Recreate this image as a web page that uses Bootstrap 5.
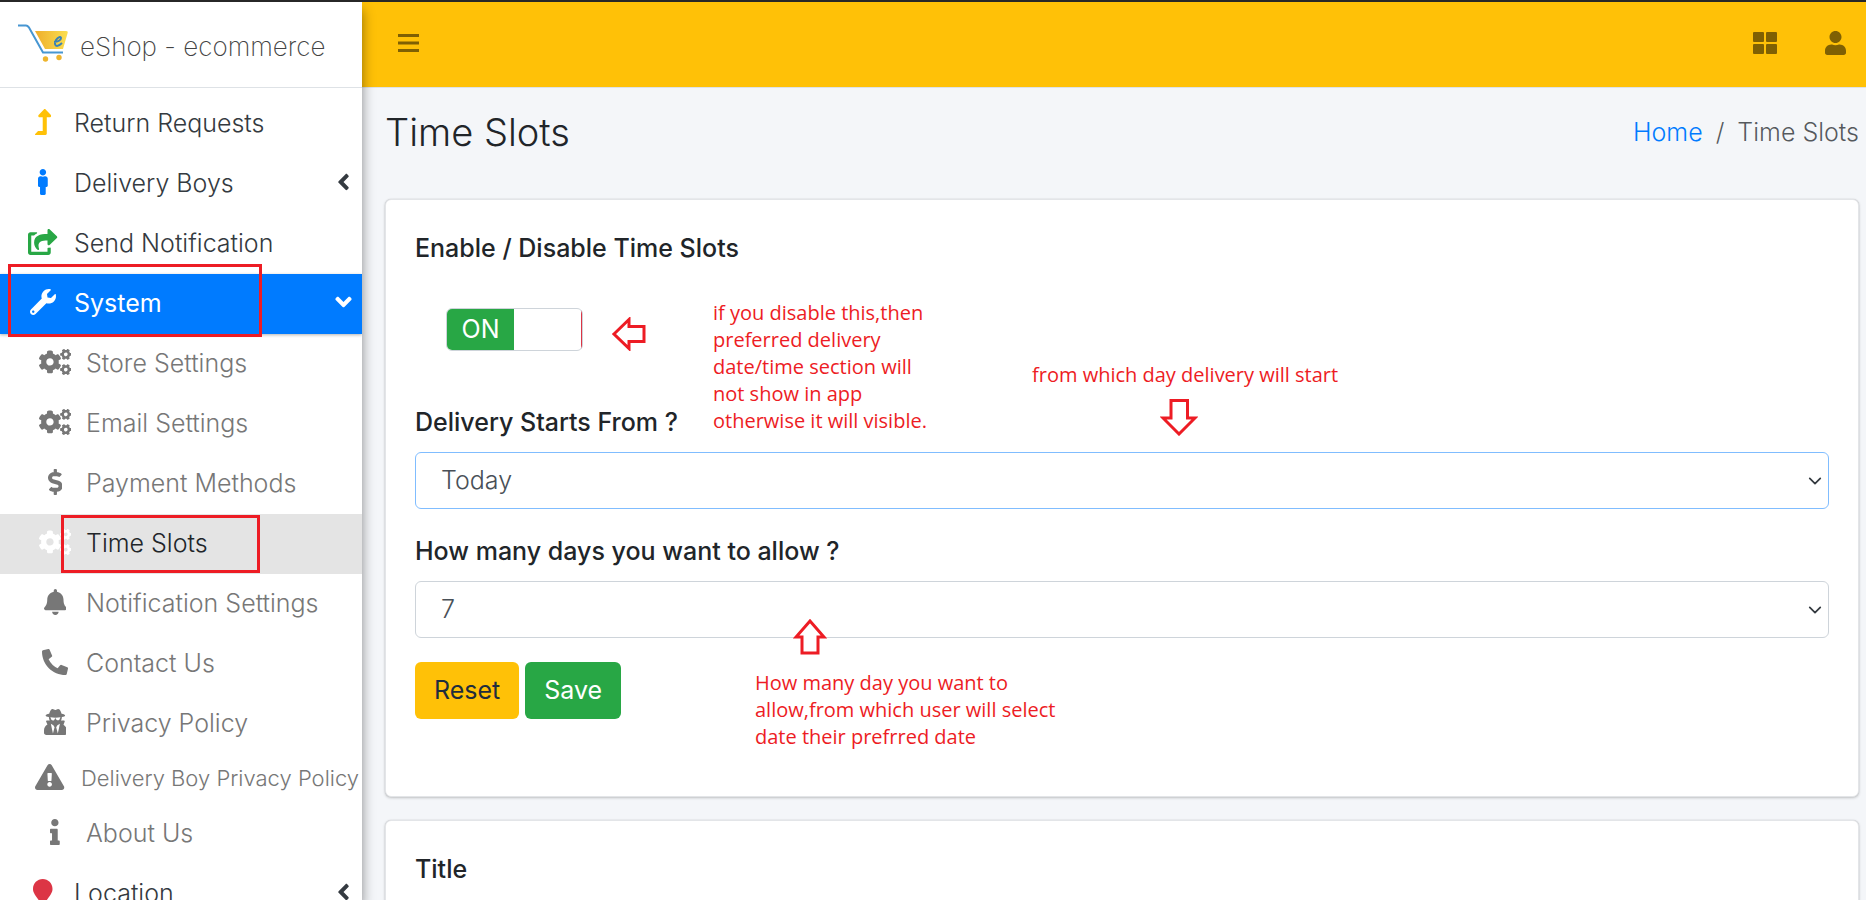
<!DOCTYPE html>
<html lang="en">
<head>
<meta charset="utf-8">
<meta name="viewport" content="width=device-width, initial-scale=1">
<title>Time Slots | eShop - ecommerce</title>
<link href="https://cdn.jsdelivr.net/npm/bootstrap@5.3.0/dist/css/bootstrap.min.css" rel="stylesheet">
<style>
:root{--amber:#ffc107;--pen:#ed1c24;--blue:#007bff;--green:#28a745}
body{font-family:Inter,"Open Sans",sans-serif;font-size:25px;font-weight:300;line-height:36px;color:#212529;background:#f4f6f9;border-top:2px solid #272727}
svg{display:block;fill:currentColor}
.side-panel{width:362px;background:#fff;z-index:5;box-shadow:0 8px 12px rgba(0,0,0,.45)}
.brand-link{height:86px;padding:4px 18px 0;gap:12px;border-bottom:1px solid #dee2e6;color:#444;font-size:26px;font-weight:200;text-decoration:none;white-space:nowrap}
.brand-link svg{width:50px;height:38px;margin-bottom:8px;flex:none}
.side-menu{padding-top:6px}
.side-menu .nav-link{height:60px;padding:0 12px 2px 24px;gap:12px;color:#343a40;border-radius:0;white-space:nowrap}
.side-menu .ico{width:38px;padding-bottom:2px;display:flex;justify-content:center;flex:none}
.side-menu .ico svg{height:26px;width:auto}
.side-menu .caret{height:26px;margin-left:auto;margin-bottom:2px}
.side-menu .nav-link.sub{padding-left:36px;color:#777}
.side-menu .nav-link.sub-long{height:50px;padding-left:31px;font-size:22px}
.side-menu .nav-link.open{background:var(--blue);color:#fff;font-weight:400;box-shadow:0 1px 3px rgba(0,0,0,.3)}
.side-menu .nav-link.here{background:#e4e4e4;color:#212529}
.side-menu .here .ico{color:#fff}
.pen-box{position:absolute;border:3px solid var(--pen);pointer-events:none}
.pen-system{left:8px;top:-10px;width:254px;height:73px}
.pen-slots{left:61px;top:1px;width:199px;height:58px}
.page-side{min-width:0}
.top-bar{height:86px;padding:0 20px 4px 36px;background:var(--amber);border-bottom:1px solid #dee2e6}
.top-bar .btn{padding:0;border:0;color:rgba(0,0,0,.5)}
.page-main{padding:0 7px 0 23px}
.page-title{font-size:38px;font-weight:300;line-height:44px}
.page-head{padding-top:22px;margin-bottom:45px}
.breadcrumb{--bs-breadcrumb-item-padding-x:13px}
.breadcrumb a{color:var(--blue);text-decoration:none}
.panel{border:1px solid #e3e5e8;border-radius:6px;box-shadow:0 0 1px rgba(0,0,0,.2),0 1px 3px rgba(0,0,0,.2);padding:30px 29px 77px;margin-bottom:23px}
.panel .form-label{font-weight:500;margin-bottom:12px;display:block}
.panel .form-select{height:57px;font-size:25px;font-weight:300;color:#495057;padding:0 40px 0 25px;border-color:#ced4da;border-radius:6px;margin-bottom:24px;background-position:right 5px center;background-size:16px 14px}
.panel .form-select.lit{border-color:#80bdff}
.switch-box{width:137px;height:43px;margin:30px 0 53px 31px;border:1px solid #ced4da;border-radius:6px;overflow:hidden;background:linear-gradient(#dc3545,#dc3545) right/1px 100% no-repeat #fff;cursor:pointer}
.switch-on{width:67px;height:100%;background:var(--green);color:#fff;font-weight:400;line-height:40px;text-align:center;display:block}
.form-actions{gap:6px}
.panel .btn{font-size:25px;height:57px;padding:0 19px;border:0;border-radius:6px}
.btn-amber{background:var(--amber);color:#1f2d3d}
.btn-green{background:var(--green);color:#fff;font-weight:400}
.note{position:absolute;font-family:"Open Sans","Noto Sans",sans-serif;font-weight:400;font-size:20px;line-height:27px;color:var(--pen);pointer-events:none;white-space:nowrap}
.note-arrow{position:absolute;fill:#fff;stroke:var(--pen);stroke-width:3;pointer-events:none}
</style>
</head>
<body class="vh-100 overflow-hidden d-flex">
<svg width="0" height="0" class="position-absolute" aria-hidden="true">
<defs>
<path id="small-gear" fill-rule="evenodd" d="M512.1 191l-8.2 14.3c-3 5.3-9.4 7.5-15.1 5.4-11.8-4.4-22.6-10.7-32.1-18.6-4.6-3.8-5.8-10.5-2.8-15.7l8.2-14.3c-6.9-8-12.3-17.3-15.9-27.4h-16.5c-6 0-11.2-4.3-12.2-10.3-2-12-2.1-24.6 0-37.1 1-6 6.2-10.4 12.2-10.4h16.5c3.6-10.1 9-19.4 15.9-27.4l-8.2-14.3c-3-5.2-1.9-11.9 2.8-15.7 9.5-7.9 20.4-14.2 32.1-18.6 5.7-2.1 12.1.1 15.1 5.4l8.2 14.3c10.5-1.9 21.2-1.9 31.7 0L552 6.3c3-5.3 9.4-7.5 15.1-5.4 11.8 4.4 22.6 10.7 32.1 18.6 4.6 3.8 5.8 10.5 2.8 15.7l-8.2 14.3c6.9 8 12.3 17.3 15.9 27.4h16.5c6 0 11.2 4.3 12.2 10.3 2 12 2.1 24.6 0 37.1-1 6-6.2 10.4-12.2 10.4h-16.5c-3.6 10.1-9 19.4-15.9 27.4l8.2 14.3c3 5.2 1.9 11.9-2.8 15.7-9.5 7.9-20.4 14.2-32.1 18.6-5.7 2.1-12.1-.1-15.1-5.4l-8.2-14.3c-10.4 1.9-21.2 1.9-31.7 0zm-10.5-58.8c38.5 29.6 82.4-14.3 52.8-52.8-38.5-29.7-82.4 14.3-52.8 52.8z"/>
<symbol id="gears" viewBox="0 0 640 512"><use href="#small-gear"/><use href="#small-gear" y="299"/><path fill-rule="evenodd" d="M386.3 286.1l33.7 16.8c10.1 5.8 14.5 18.1 10.5 29.1-8.9 24.2-26.4 46.4-42.6 65.8-7.4 8.9-20.2 11.1-30.3 5.3l-29.1-16.8c-16 13.7-34.6 24.6-54.9 31.7v33.6c0 11.6-8.3 21.6-19.7 23.6-24.6 4.2-50.4 4.4-75.9 0-11.5-2-20-11.9-20-23.6V418c-20.3-7.2-38.9-18-54.9-31.7L74 403c-10 5.8-22.9 3.6-30.3-5.3-16.2-19.4-33.3-41.6-42.2-65.7-4-10.9.4-23.2 10.5-29.1l33.3-16.8c-3.9-20.9-3.9-42.4 0-63.4L12 205.8c-10.1-5.8-14.6-18.1-10.5-29 8.9-24.2 26-46.4 42.2-65.8 7.4-8.9 20.2-11.1 30.3-5.3l29.1 16.8c16-13.7 34.6-24.6 54.9-31.7V57.1c0-11.5 8.2-21.5 19.6-23.5 24.6-4.2 50.5-4.4 76-.1 11.5 2 20 11.9 20 23.6v33.6c20.3 7.2 38.9 18 54.9 31.7l29.1-16.8c10-5.8 22.9-3.6 30.3 5.3 16.2 19.4 33.2 41.6 42.1 65.8 4 10.9.1 23.2-10 29.1l-33.7 16.8c3.9 21 3.9 42.5 0 63.5zm-117.6 21.1c59.2-77-28.7-164.9-105.7-105.7-59.2 77 28.7 164.9 105.7 105.7z"/></symbol>
<symbol id="angle-left" viewBox="0 0 256 512"><path d="M31.7 239l136-136c9.4-9.4 24.6-9.4 33.9 0l22.6 22.6c9.4 9.4 9.4 24.6 0 33.9L127.9 256l96.4 96.4c9.4 9.4 9.4 24.6 0 33.9L201.7 409c-9.4 9.4-24.6 9.4-33.9 0l-136-136c-9.5-9.4-9.5-24.6-.1-34z"/></symbol>
<linearGradient id="gold" x1="0" x2="1"><stop offset="0" stop-color="#eeae2c"/><stop offset="1" stop-color="#fbdf50"/></linearGradient>
</defs>
</svg>

<aside class="side-panel flex-shrink-0 h-100 overflow-hidden">
  <a href="#" class="brand-link d-flex align-items-center">
    <svg viewBox="0 0 50 38" aria-hidden="true"><path d="M0 1.500h8c1.500 0 2 .7 3 2L25 28.500h20" fill="none" stroke="#4796d2" stroke-width="2"/><path d="M17 7h31c2 0 2 1 1.500 2.500L45 25H27z" fill="url(#gold)"/><path d="M36 18c4 0 7-2 7-4s-3-1-5 2-1 6 1 6 3-1 5-3" fill="none" stroke="#3b82b5" stroke-width="2"/><circle cx="27.500" cy="35" r="2.700" fill="#edb42d"/><circle cx="41" cy="33.500" r="2.700" fill="#edb42d"/></svg>
    <span>eShop - ecommerce</span>
  </a>
  <nav class="side-menu nav flex-column flex-nowrap" aria-label="Main menu">
    <a href="#" class="nav-link d-flex align-items-center"><span class="ico" style="color:#ffc107"><svg viewBox="0 0 320 512"><path d="M313.553 119.669L209.587 7.666c-9.485-10.214-25.676-10.229-35.174 0L70.438 119.669C56.232 134.969 67.062 160 88.025 160H152v272H68.024a11.996 11.996 0 0 0-8.485 3.515l-56 56C-4.021 499.074 1.333 512 12.024 512H208c13.255 0 24-10.745 24-24V160h63.966c20.878 0 31.851-24.969 17.587-40.331z"/></svg></span>Return Requests</a>
    <a href="#" class="nav-link d-flex align-items-center"><span class="ico" style="color:#007bff"><svg viewBox="0 0 192 512"><path d="M96 0c35.346 0 64 28.654 64 64s-28.654 64-64 64-64-28.654-64-64S60.654 0 96 0m48 144h-11.360c-22.711 10.443-49.590 10.894-73.280 0H48c-26.510 0-48 21.490-48 48v136c0 13.255 10.745 24 24 24h16v136c0 13.255 10.745 24 24 24h64c13.255 0 24-10.745 24-24V352h16c13.255 0 24-10.745 24-24V192c0-26.510-21.490-48-48-48z"/></svg></span>Delivery Boys<svg class="caret" width="13" viewBox="0 0 256 512"><use href="#angle-left"/></svg></a>
    <a href="#" class="nav-link d-flex align-items-center"><span class="ico" style="color:#28a745"><svg viewBox="0 0 576 512"><path d="M568.482 177.448L424.479 313.433C409.3 327.768 384 317.14 384 295.985v-71.963c-144.575.97-205.566 35.113-164.775 171.353 4.483 14.973-12.846 26.567-25.006 17.33C155.252 383.105 120 326.488 120 269.339c0-143.937 117.599-172.5 264-173.312V24.012c0-21.174 25.317-31.768 40.479-17.448l144.003 135.988c10.02 9.463 10.028 25.425 0 34.896zM384 379.128V448H64V128h50.916a11.99 11.99 0 0 0 8.648-3.693c14.953-15.568 32.237-27.89 51.014-37.676C185.708 80.83 181.584 64 169.033 64H48C21.490 64 0 85.490 0 112v352c0 26.510 21.490 48 48 48h352c26.510 0 48-21.490 48-48v-88.806c0-8.288-8.197-14.066-16.011-11.302a71.830 71.830 0 0 1-34.189 3.377c-7.270-1.046-13.800 4.514-13.800 11.859z"/></svg></span>Send Notification</a>
    <div class="position-relative z-1">
      <a href="#" class="nav-link open d-flex align-items-center"><span class="ico"><svg viewBox="0 0 512 512"><path d="M507.73 109.1c-2.24-9.03-13.54-12.09-20.12-5.51l-74.36 74.36-67.88-11.31-11.31-67.88 74.36-74.36c6.62-6.62 3.43-17.9-5.66-20.16-47.38-11.74-99.55.91-136.58 37.93-39.64 39.64-50.55 97.1-34.05 147.2L18.74 402.76c-24.99 24.99-24.99 65.51 0 90.5 24.99 24.99 65.51 24.99 90.5 0l213.21-213.21c50.12 16.71 107.47 5.68 147.37-34.22 37.07-37.07 49.7-89.32 37.91-136.73zM64 472c-13.25 0-24-10.75-24-24 0-13.26 10.75-24 24-24s24 10.74 24 24c0 13.25-10.75 24-24 24z"/></svg></span>System<svg class="caret" width="13" viewBox="0 0 256 512" style="rotate:-90deg"><use href="#angle-left"/></svg></a>
      <span class="pen-box pen-system"></span>
    </div>
    <a href="#" class="nav-link sub d-flex align-items-center"><span class="ico"><svg viewBox="0 0 640 512"><use href="#gears"/></svg></span>Store Settings</a>
    <a href="#" class="nav-link sub d-flex align-items-center"><span class="ico"><svg viewBox="0 0 640 512"><use href="#gears"/></svg></span>Email Settings</a>
    <a href="#" class="nav-link sub d-flex align-items-center"><span class="ico"><svg viewBox="0 0 288 512"><path d="M209.2 233.4l-108-31.6C88.7 198.2 80 186.5 80 173.5c0-16.3 13.2-29.5 29.5-29.5h66.3c12.2 0 24.2 3.7 34.2 10.5 6.1 4.1 14.3 3.1 19.5-2l34.8-34c7.1-6.9 6.1-18.4-1.8-24.5C238 74.800 207.400 64.100 176 64V16c0-8.800-7.200-16-16-16h-32c-8.800 0-16 7.200-16 16v48h-2.500C45.800 64-5.400 118.700.5 183.600c4.200 46.100 39.400 83.600 83.800 96.600l102.500 30c12.500 3.700 21.200 15.300 21.200 28.300 0 16.300-13.200 29.500-29.500 29.500h-66.300C100 368 88 364.300 78 357.500c-6.100-4.100-14.300-3.100-19.500 2l-34.800 34c-7.100 6.900-6.100 18.400 1.800 24.500 24.500 19.200 55.100 29.900 86.500 30v48c0 8.800 7.200 16 16 16h32c8.800 0 16-7.200 16-16v-48.200c46.600-.9 90.300-28.600 105.700-72.700 21.500-61.600-14.600-124.800-72.500-141.700z"/></svg></span>Payment Methods</a>
    <div class="position-relative">
      <a href="#" class="nav-link sub here d-flex align-items-center" aria-current="page"><span class="ico"><svg viewBox="0 0 640 512"><use href="#gears"/></svg></span>Time Slots</a>
      <span class="pen-box pen-slots"></span>
    </div>
    <a href="#" class="nav-link sub d-flex align-items-center"><span class="ico"><svg viewBox="0 0 448 512"><path d="M224 512c35.32 0 63.97-28.65 63.97-64H160.030c0 35.350 28.650 64 63.970 64zm215.390-149.710c-19.320-20.760-55.470-51.990-55.470-154.290 0-77.700-54.480-139.900-127.940-155.160V32c0-17.670-14.320-32-31.980-32s-31.980 14.330-31.980 32v20.840C118.560 68.100 64.080 130.300 64.080 208c0 102.300-36.150 133.530-55.470 154.290-6 6.450-8.660 14.160-8.610 21.710.11 16.400 12.980 32 32.100 32h383.800c19.120 0 32-15.600 32.100-32 .05-7.550-2.610-15.270-8.610-21.710z"/></svg></span>Notification Settings</a>
    <a href="#" class="nav-link sub d-flex align-items-center"><span class="ico"><svg viewBox="0 0 512 512"><path d="M497.390 361.800l-112-48a24 24 0 0 0-28 6.900l-49.600 60.600A370.660 370.660 0 0 1 130.600 204.110l60.600-49.600a23.940 23.940 0 0 0 6.900-28l-48-112A24.160 24.160 0 0 0 122.600.61l-104 24A24 24 0 0 0 0 48c0 256.500 207.900 464 464 464a24 24 0 0 0 23.400-18.600l24-104a24.290 24.290 0 0 0-14.010-27.600z"/></svg></span>Contact Us</a>
    <a href="#" class="nav-link sub d-flex align-items-center"><span class="ico"><svg viewBox="0 0 448 512"><path d="M383.9 308.3l23.9-62.6c4-10.5-3.7-21.7-15-21.7h-58.5c11-18.9 17.8-40.6 17.8-64v-.3c39.2-7.8 64-19.1 64-31.7 0-13.3-27.3-25.1-70.1-33-9.2-32.8-27-65.8-40.6-82.8-9.5-11.9-25.9-15.6-39.5-8.8l-27.6 13.8c-9 4.5-19.6 4.5-28.6 0L182.1 3.4c-13.6-6.8-30-3.1-39.5 8.8-13.5 17-31.4 50-40.6 82.8-42.7 7.9-70 19.7-70 33 0 12.6 24.8 23.9 64 31.7v.3c0 23.4 6.8 45.1 17.8 64H56.3c-11.5 0-19.2 11.7-14.7 22.3l25.8 60.2C27.3 329.8 0 372.7 0 422.4v44.8C0 491.9 20.1 512 44.8 512h358.4c24.700 0 44.800-20.100 44.800-44.800v-44.800c0-48.400-25.800-90.400-64.100-114.100zM176 480l-41.600-192 49.600 32 24 40-32 120zm96 0l-32-120 24-40 49.600-32L272 480zm41.700-298.500c-3.900 11.900-7 24.600-16.500 33.400-10.100 9.300-48 22.400-64-25-2.800-8.400-15.400-8.400-18.300 0-17 50.200-56 32.400-64 25-9.500-8.800-12.700-21.500-16.500-33.400-.8-2.500-6.300-5.700-6.300-5.800v-10.800c28.300 3.600 61 5.800 96 5.800s67.700-2.100 96-5.800v10.800c-.1.100-5.600 3.200-6.400 5.800z"/></svg></span>Privacy Policy</a>
    <a href="#" class="nav-link sub sub-long d-flex align-items-center"><span class="ico"><svg viewBox="0 0 576 512"><path d="M569.517 440.013C587.975 472.007 564.806 512 527.940 512H48.054c-36.937 0-59.999-40.055-41.577-71.987L246.423 23.985c18.467-32.009 64.720-31.951 83.154 0l239.940 416.028zM288 354c-25.405 0-46 20.595-46 46s20.595 46 46 46 46-20.595 46-46-20.595-46-46-46zm-43.673-165.346l7.418 136c.347 6.364 5.609 11.346 11.982 11.346h48.546c6.373 0 11.635-4.982 11.982-11.346l7.418-136c.375-6.874-5.098-12.654-11.982-12.654h-63.383c-6.884 0-12.356 5.780-11.981 12.654z"/></svg></span>Delivery Boy Privacy Policy</a>
    <a href="#" class="nav-link sub d-flex align-items-center"><span class="ico"><svg viewBox="0 0 192 512"><path d="M20 424.229h20V279.771H20c-11.046 0-20-8.954-20-20V212c0-11.046 8.954-20 20-20h112c11.046 0 20 8.954 20 20v212.229h20c11.046 0 20 8.954 20 20V492c0 11.046-8.954 20-20 20H20c-11.046 0-20-8.954-20-20v-47.771c0-11.046 8.954-20 20-20zM96 0C56.235 0 24 32.235 24 72s32.235 72 72 72 72-32.235 72-72S135.764 0 96 0z"/></svg></span>About Us</a>
    <a href="#" class="nav-link d-flex align-items-center"><span class="ico" style="color:#dc3545"><svg viewBox="0 0 384 512"><path d="M172.268 501.670C26.970 291.031 0 269.413 0 192 0 85.961 85.961 0 192 0s192 85.961 192 192c0 77.413-26.970 99.031-172.268 309.670-9.535 13.774-29.930 13.773-39.464 0z"/></svg></span>Location<svg class="caret" width="13" viewBox="0 0 256 512"><use href="#angle-left"/></svg></a>
  </nav>
</aside>

<div class="page-side flex-grow-1 h-100 overflow-hidden">
  <header class="top-bar d-flex align-items-center justify-content-between">
    <button type="button" class="btn" aria-label="Toggle menu"><svg width="21" height="18" viewBox="0 0 21 18"><path d="M0 0h21v3H0zM0 7.500h21v3H0zM0 15h21v3H0z"/></svg></button>
    <div class="d-flex align-items-center gap-5">
      <button type="button" class="btn" aria-label="Apps"><svg width="24" height="22" viewBox="0 0 24 22"><rect width="11" height="10" rx="1"/><rect x="13" width="11" height="10" rx="1"/><rect y="12" width="11" height="10" rx="1"/><rect x="13" y="12" width="11" height="10" rx="1"/></svg></button>
      <button type="button" class="btn" aria-label="Account"><svg width="21" height="24" viewBox="0 0 448 512"><path d="M224 256c70.700 0 128-57.300 128-128S294.700 0 224 0 96 57.300 96 128s57.300 128 128 128zm89.600 32h-16.700c-22.200 10.200-46.900 16-72.900 16s-50.600-5.800-72.900-16h-16.700C60.200 288 0 348.200 0 422.400V464c0 26.500 21.500 48 48 48h352c26.500 0 48-21.500 48-48v-41.600c0-74.200-60.200-134.400-134.400-134.400z"/></svg></button>
    </div>
  </header>
  <main class="page-main">
    <div class="page-head d-flex justify-content-between align-items-center">
      <h1 class="page-title mb-0">Time Slots</h1>
      <nav aria-label="breadcrumb"><ol class="breadcrumb mb-0"><li class="breadcrumb-item"><a href="#">Home</a></li><li class="breadcrumb-item active" aria-current="page">Time Slots</li></ol></nav>
    </div>
    <form class="card panel">
      <label class="form-label" for="enabled">Enable / Disable Time Slots</label>
      <label class="switch-box"><input class="visually-hidden" type="checkbox" id="enabled" checked><span class="switch-on">ON</span></label>
      <label class="form-label" for="starts">Delivery Starts From ?</label>
      <select class="form-select lit" id="starts"><option>Today</option><option>Tomorrow</option></select>
      <label class="form-label" for="days">How many days you want to allow ?</label>
      <select class="form-select" id="days"><option>7</option><option>14</option></select>
      <div class="form-actions d-flex"><button type="reset" class="btn btn-amber">Reset</button><button type="submit" class="btn btn-green">Save</button></div>

      <svg class="note-arrow" style="left:226px;top:117px" width="34" height="34" viewBox="0 0 34 34"><path d="M2 17L17 2.500V9.500H32V24.500H17V31.500Z"/></svg>
      <p class="note mb-0" style="left:327px;top:99px">if you disable this,then<br>preferred delivery<br>date/time section will<br>not show in app<br>otherwise it will visible.</p>
      <p class="note mb-0" style="left:646px;top:161px">from which day delivery will start</p>
      <svg class="note-arrow" style="left:774px;top:198px" width="38" height="38" viewBox="0 0 38 38"><path d="M11 2.500H27.500V20H35L19 36L3 20H11Z"/></svg>
      <svg class="note-arrow" style="left:407px;top:419px" width="34" height="36" viewBox="0 0 34 36"><path d="M17 2L31 18H25V34H9V18H3Z"/></svg>
      <p class="note mb-0" style="left:369px;top:469px">How many day you want to<br>allow,from which user will select<br>date their prefrred date</p>
    </form>
    <section class="card panel"><label class="form-label mb-4" for="slot-title">Title</label><input class="form-control" id="slot-title" type="text"></section>
  </main>
</div>
<script src="https://cdn.jsdelivr.net/npm/bootstrap@5.3.0/dist/js/bootstrap.bundle.min.js"></script>
</body>
</html>
